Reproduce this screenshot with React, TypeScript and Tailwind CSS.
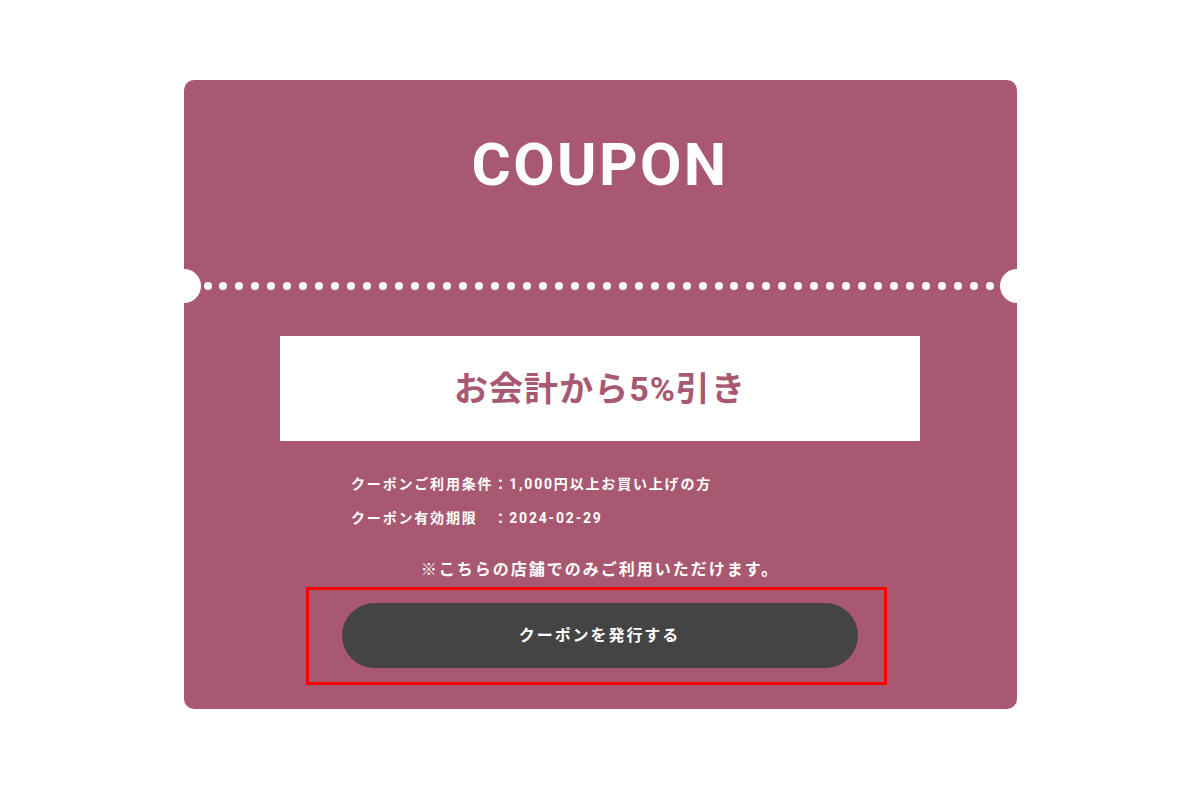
import React from 'react';

const jp = { fontFamily: 'Roboto, "Noto Sans CJK JP", "Noto Sans", sans-serif' };

export default function App() {
  const dots = Array.from({ length: 50 });

  return (
    <div className="min-h-screen bg-white pt-[80px]">
      {/* クーポン本体 */}
      <div className="mx-auto w-[833px] rounded-[10px] bg-[#a85971] pb-[24px]">
        {/* タイトル */}
        <div className="pt-[55px] text-center">
          <h1
            className="h-[60px] text-[60px] font-bold leading-none tracking-[0.04em] text-white"
            style={{ fontFamily: 'Roboto, "Liberation Sans", sans-serif' }}
          >
            COUPON
          </h1>
        </div>

        {/* 切り取り線 */}
        <div className="relative mt-[87px] h-[8px]">
          <span className="absolute left-[-17px] top-1/2 h-[34px] w-[34px] -translate-y-1/2 rounded-full bg-white" />
          <div className="ml-[20px] flex w-[791px] justify-between">
            {dots.map((_, i) => (
              <span key={i} className="h-[8px] w-[8px] rounded-full bg-white" />
            ))}
          </div>
          <span className="absolute right-[-17px] top-1/2 h-[34px] w-[34px] -translate-y-1/2 rounded-full bg-white" />
        </div>

        {/* 割引内容 */}
        <div className="mx-auto mt-[46px] flex h-[105px] w-[640px] items-center justify-center bg-white">
          <p className="text-[34px] font-bold leading-none tracking-[0.03em] text-[#a85971]" style={jp}>
            お会計から5%引き
          </p>
        </div>

        {/* 条件 */}
        <div className="mx-auto mt-[26px] w-[640px] pl-[71px]" style={jp}>
          <p className="text-[14px] font-bold leading-[34px] tracking-[0.13em] text-white">
            クーポンご利用条件：1,000円以上お買い上げの方
          </p>
          <p className="text-[14px] font-bold leading-[34px] tracking-[0.13em] text-white">
            クーポン有効期限　：2024-02-29
          </p>
        </div>

        <p
          className="mt-[23px] text-center text-[16px] font-bold leading-[24px] tracking-[0.125em] text-white"
          style={jp}
        >
          ※こちらの店舗でのみご利用いただけます。
        </p>

        {/* 発行ボタン */}
        <div className="mt-[5px] flex justify-center">
          <div className="ml-[-8px] border-[3px] border-[#ff0000] pb-[14px] pl-[33px] pr-[26px] pt-[13px]">
            <button
              className="flex h-[65px] w-[516px] items-center justify-center rounded-full bg-[#444444] text-[16px] font-bold tracking-[0.12em] text-white"
              style={jp}
            >
              クーポンを発行する
            </button>
          </div>
        </div>
      </div>
    </div>
  );
}
